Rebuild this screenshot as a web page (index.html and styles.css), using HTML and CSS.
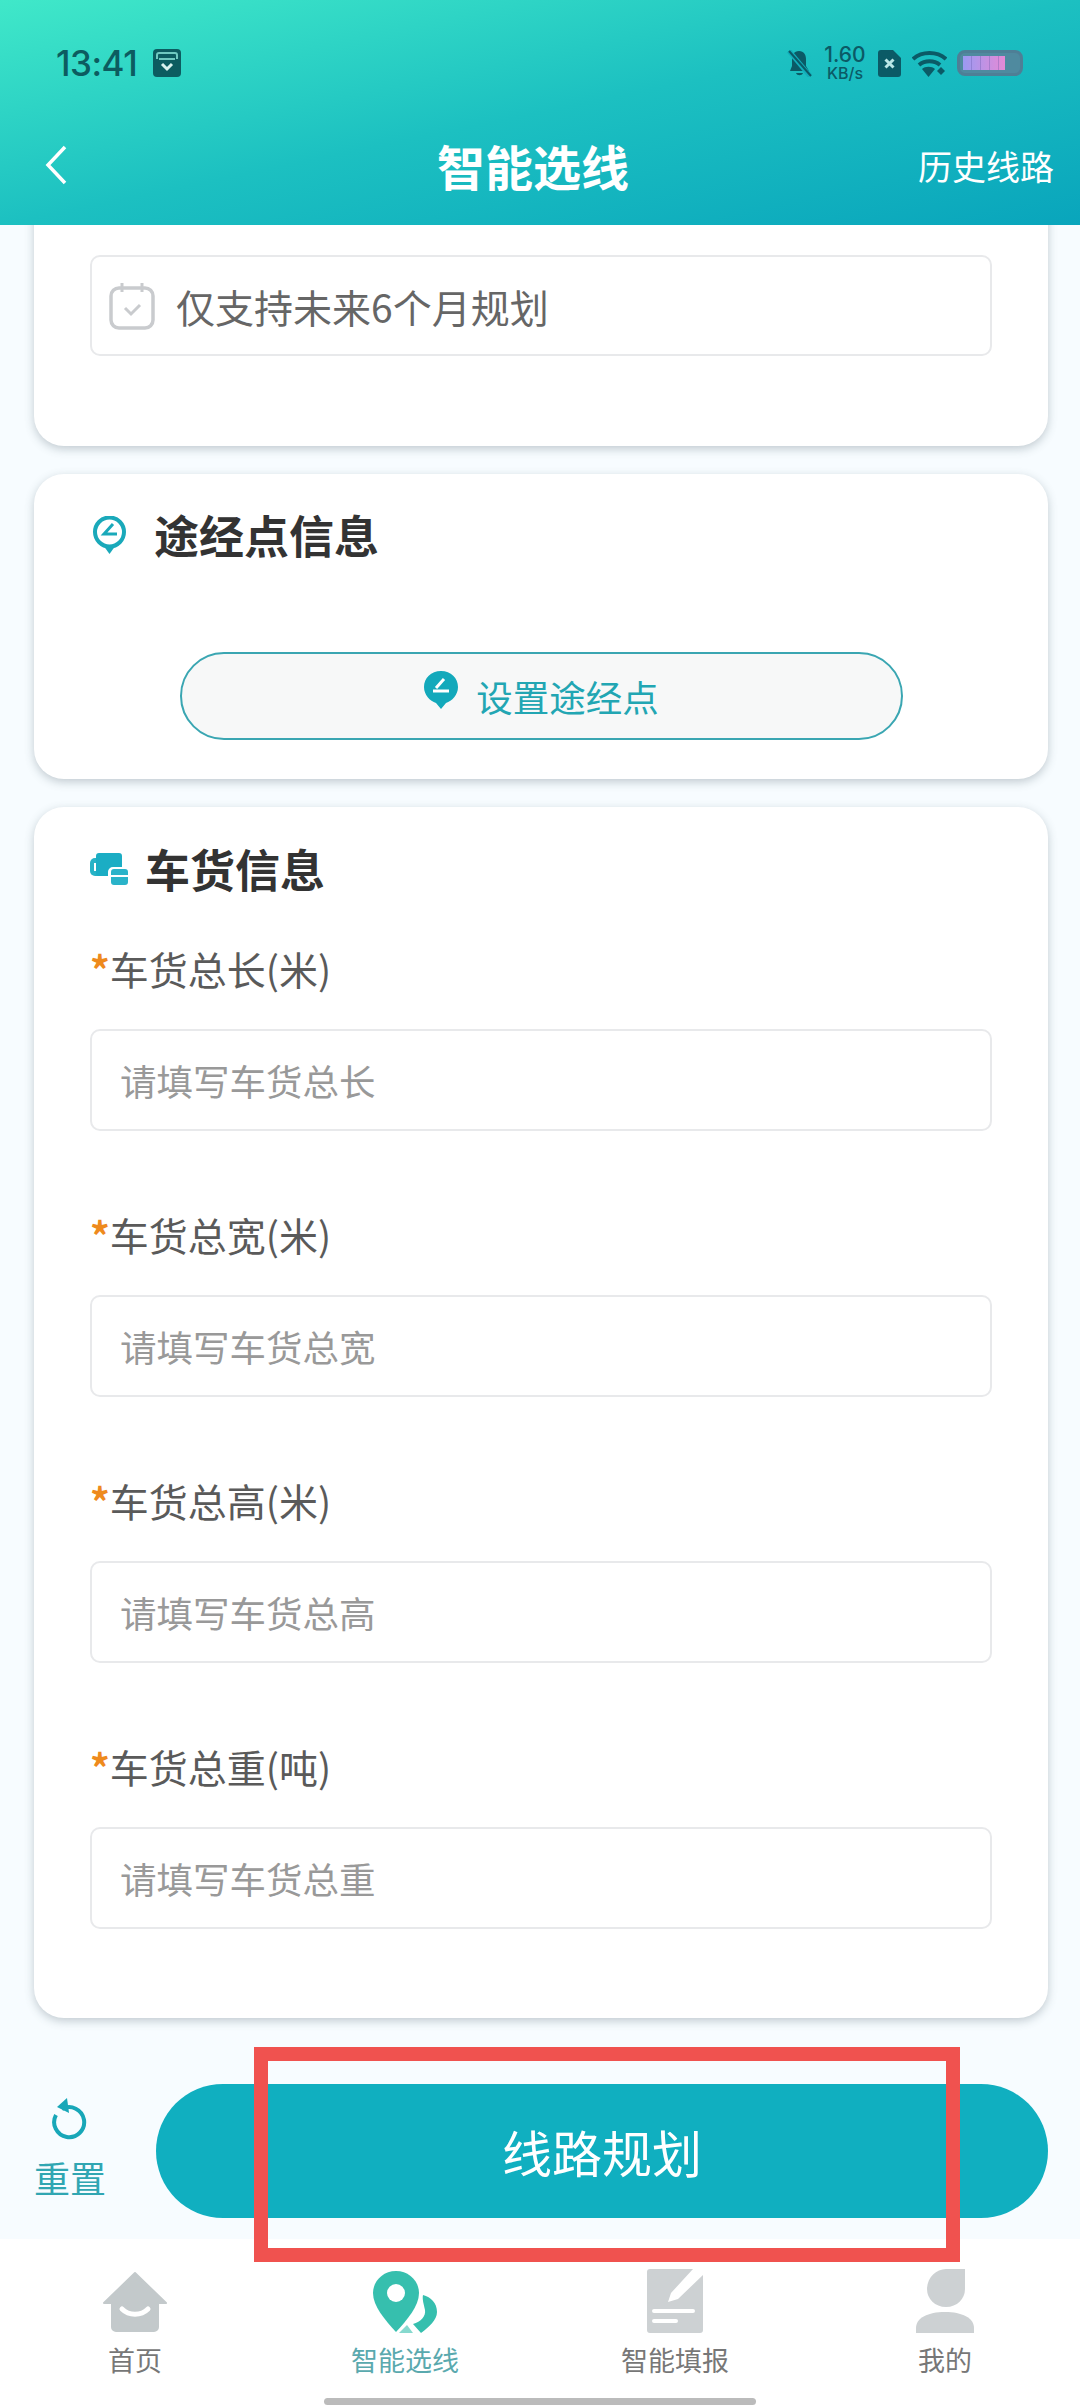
FILE: index.html
```html
<!DOCTYPE html>
<html lang="zh-CN">
<head>
  <meta charset="UTF-8">
  <meta name="viewport" content="width=device-width, initial-scale=1.0">
  <title>智能选线</title>
  <link rel="stylesheet" href="styles.css">
</head>
<body>
  <div class="page">
    <header class="top">
      <div class="status-bar">
        <div class="status-left">
          <span class="clock">13:41</span>
          <svg class="app-badge" viewBox="0 0 28 28"><rect width="28" height="28" rx="4" fill="#0c5c60"/><path d="M4 10V6a2 2 0 0 1 2-2h16a2 2 0 0 1 2 2v4" fill="none" stroke="#6fc9c0" stroke-width="2"/><path d="M6 10h16" stroke="#6fc9c0" stroke-width="2"/><path d="M9 15l5 5 5-5" fill="none" stroke="#d8f2ee" stroke-width="3"/></svg>
        </div>
        <div class="status-right">
          <svg class="bell" viewBox="0 0 25 27"><path d="M12 1c5 0 7 4 7 8v7l3 5H3l2-5V9c0-4 2-8 7-8zM9 23h7c-1 3-6 3-7 0z" fill="#0b5a66"/><path d="M2 1l21 25" stroke="#12aebb" stroke-width="5"/><path d="M2 1l22 25" stroke="#0b5a66" stroke-width="2"/></svg>
          <div class="speed"><span>1.60</span><span class="speed-unit">KB/s</span></div>
          <svg class="sim" viewBox="0 0 23 27"><path d="M3 0h12l8 8v16a3 3 0 0 1-3 3H3a3 3 0 0 1-3-3V3a3 3 0 0 1 3-3z" fill="#0b5a66"/><path d="M7.500 9.500l8 8m0-8l-8 8" stroke="#b9e6e6" stroke-width="3"/></svg>
          <svg class="wifi" viewBox="0 0 35 27"><g fill="none" stroke="#0b5a66" stroke-width="4"><path d="M1 9c9-8 24-8 33 0"/><path d="M7 15c6-5 15-5 21 0"/></g><path d="M10 19c3-3 10-3 13 0l-6.500 8z" fill="#0b5a66"/><path d="M29 17l4 4-4 4-4-4z" fill="#0b5a66"/></svg>
          <div class="battery">
            <div class="battery-level"></div>
          </div>
        </div>
      </div>
      <div class="nav-bar">
        <div class="nav-side">
          <svg class="back" viewBox="0 0 22 40"><path d="M20 2L3 20l17 18" fill="none" stroke="#fff" stroke-width="3.500"/></svg>
        </div>
        <div class="nav-title">智能选线</div>
        <div class="nav-side nav-history">历史线路</div>
      </div>
    </header>

    <main class="content">
      <div class="cards">
        <section class="card card-date">
          <div class="text-box date-box">
            <svg class="calendar" viewBox="0 0 46 48"><rect x="2" y="6" width="42" height="40" rx="8" fill="none" stroke="#c9cbce" stroke-width="3.500"/><path d="M13 1v9M33 1v9" stroke="#c9cbce" stroke-width="3"/><path d="M16 26l6 6 9-9" fill="none" stroke="#c9cbce" stroke-width="3"/></svg>
            <span>仅支持未来6个月规划</span>
          </div>
        </section>

        <section class="card card-via">
          <h3 class="card-title">
            <svg class="via-icon" viewBox="0 0 35 38"><circle cx="17.500" cy="16" r="14.500" fill="none" stroke="#1aa9ba" stroke-width="4"/><path d="M11 29h13l-6.500 9z" fill="#1aa9ba"/><path d="M21 8l-9 10h13" fill="none" stroke="#1aa9ba" stroke-width="3"/></svg>
            <span>途经点信息</span>
          </h3>
          <button class="via-button">
            <svg class="via-button-icon" viewBox="0 0 34 38"><path d="M17 0c10 0 17 7 17 16 0 8-6 14-12 16l-5 6-5-6C6 30 0 24 0 16 0 7 7 0 17 0z" fill="#13a9bb"/><path d="M20 8l-8 9" stroke="#fff" stroke-width="3"/><path d="M9 20h16" stroke="#fff" stroke-width="3"/></svg>
            <span>设置途经点</span>
          </button>
        </section>

        <section class="card card-cargo">
          <h3 class="card-title cargo-title">
            <svg class="truck-icon" viewBox="0 0 38 32"><path d="M9 5H5a5 5 0 0 0-5 5v8a5 5 0 0 0 5 5h4z" fill="#27b3c6"/><path d="M4 10h4v8H4z" fill="#fff"/><path d="M9 0h20a3 3 0 0 1 3 3v11H23a5 5 0 0 0-5 5v4H9a3 3 0 0 1-3-3V3a3 3 0 0 1 3-3z" fill="#1badc4"/><path d="M24 16h11a3 3 0 0 1 3 3v3H21v-3a3 3 0 0 1 3-3zM21 24h17v5a3 3 0 0 1-3 3H24a3 3 0 0 1-3-3z" fill="#2ab3c9"/></svg>
            <span>车货信息</span>
          </h3>
          <div class="field">
            <label class="field-label"><i>*</i>车货总长(米)</label>
            <input class="text-box field-input" placeholder="请填写车货总长">
          </div>
          <div class="field">
            <label class="field-label"><i>*</i>车货总宽(米)</label>
            <input class="text-box field-input" placeholder="请填写车货总宽">
          </div>
          <div class="field">
            <label class="field-label"><i>*</i>车货总高(米)</label>
            <input class="text-box field-input" placeholder="请填写车货总高">
          </div>
          <div class="field">
            <label class="field-label"><i>*</i>车货总重(吨)</label>
            <input class="text-box field-input" placeholder="请填写车货总重">
          </div>
        </section>
      </div>

      <div class="actions">
        <div class="reset">
          <svg class="reset-icon" viewBox="0 0 36 42"><path d="M10 11a15 15 0 1 1-6 6" fill="none" stroke="#18a7b8" stroke-width="4"/><path d="M5 9L15 0l2 15z" fill="#18a7b8"/></svg>
          <span>重置</span>
        </div>
        <button class="plan-button">线路规划</button>
      </div>
    </main>

    <nav class="tabs">
      <div class="tab">
        <svg class="tab-icon" viewBox="0 0 64 62"><path d="M32 2L63 32H55V56a4 4 0 0 1-4 4H13a4 4 0 0 1-4-4V32H1z" fill="#c3c9cb" stroke="#c3c9cb" stroke-width="2" stroke-linejoin="round"/><path d="M19 38c7 7 19 7 26 0" fill="none" stroke="#fff" stroke-width="5" stroke-linecap="round"/></svg>
        <span>首页</span>
      </div>
      <div class="tab tab-active">
        <svg class="tab-icon" viewBox="0 0 64 62"><path d="M23 0c13 0 23 10 23 22 0 13-12 27-23 39C12 49 0 35 0 22 0 10 10 0 23 0z" fill="#36bfae"/><circle cx="23" cy="22" r="9" fill="#fff"/><path d="M50 24c8 2 14 8 14 17 0 8-8 15-16 21l-8-9c8-2 13-8 12-14-1-5-3-11-2-15z" fill="#36bfae"/><path d="M28 60l6-6 6 8H26z" fill="#36bfae" opacity=".6"/></svg>
        <span>智能选线</span>
      </div>
      <div class="tab">
        <svg class="tab-icon tab-icon-tall" viewBox="0 0 56 64"><path d="M3 0h43L24 24l-3 9 10-3L56 6v55a3 3 0 0 1-3 3H3a3 3 0 0 1-3-3V3a3 3 0 0 1 3-3z" fill="#cdd1d3"/><path d="M7 42h39M7 52h22" stroke="#fff" stroke-width="4" stroke-linecap="round"/></svg>
        <span>智能填报</span>
      </div>
      <div class="tab">
        <svg class="tab-icon tab-icon-tall" viewBox="0 0 58 64"><path d="M30 0h19v20c0 10-8 18-19 18s-19-8-19-18C11 9 20 0 30 0z" fill="#cdd1d3"/><path d="M0 64v-5c0-10 12-16 29-16s29 6 29 16v5z" fill="#cdd1d3"/></svg>
        <span>我的</span>
      </div>
      <div class="home-bar"></div>
    </nav>

    <div class="highlight"></div>
  </div>
</body>
</html>
```

FILE: styles.css
```css
* { box-sizing: border-box; }
html, body { margin: 0; padding: 0; }
body {
  width: 1080px;
  height: 2408px;
  overflow: hidden;
  font-family: "Noto Sans CJK SC", "Noto Sans", sans-serif;
  background: #f7fcff;
}
.page { position: relative; display: flex; flex-direction: column; height: 2408px; }

/* top bar */
.top {
  position: relative;
  z-index: 2;
  flex: 0 0 225px;
  background: linear-gradient(to bottom right, #40e8c9 0%, #1cc0c1 50%, #09a5bc 100%);
}
.status-bar {
  display: flex;
  justify-content: space-between;
  align-items: center;
  height: 126px;
  padding: 0 57px 0 56px;
}
.status-left { display: flex; align-items: center; gap: 16px; }
.clock { font-family: Inter, "Noto Sans", sans-serif; font-size: 35px; font-weight: 500; color: #0c5c60; letter-spacing: -0.5px; }
.app-badge { width: 28px; height: 28px; }
.status-right { display: flex; align-items: center; }
.bell { width: 25px; height: 27px; margin-right: 12px; }
.speed {
  display: flex;
  flex-direction: column;
  align-items: center;
  width: 42px;
  font-family: Inter, "Noto Sans", sans-serif;
  font-size: 21px;
  font-weight: 500;
  line-height: 20px;
  color: #0b5a66;
}
.speed-unit { font-size: 16px; line-height: 16px; }
.sim { width: 23px; height: 27px; margin-left: 12px; }
.wifi { width: 35px; height: 27px; margin-left: 11px; }
.battery {
  width: 66px;
  height: 26px;
  margin-left: 10px;
  padding: 3px;
  border: 3px solid #4e7f96;
  border-radius: 8px;
  background: #4f8a9f;
}
.battery-level {
  width: 42px;
  height: 100%;
  background: repeating-linear-gradient(to right, transparent 0 8px, rgba(90, 80, 160, 0.3) 8px 9px), linear-gradient(to right, #9a9af2, #e58ad6);
}
.nav-bar {
  display: flex;
  justify-content: space-between;
  align-items: center;
  height: 78px;
}
.nav-side { flex: 0 0 200px; padding-left: 45px; }
.back { display: block; width: 22px; height: 40px; }
.nav-title { margin-right: 14px; font-size: 48px; font-weight: 700; color: #fff; }
.nav-history { padding: 0 26px 0 0; text-align: right; font-size: 34px; color: #fff; }

/* cards */
.content {
  display: flex;
  flex-direction: column;
  flex: 1;
  min-height: 0;
}
.cards { display: flex; flex-direction: column; gap: 28px; padding: 0 32px 0 34px; }
.card {
  background: #fff;
  border-radius: 30px;
  box-shadow: 0 3px 10px rgba(70, 90, 100, 0.3);
  padding: 0 57px 0 56px;
}
.card-date { height: 261px; margin-top: -40px; padding-top: 70px; }
.card-via { height: 305px; padding-top: 37px; }
.card-cargo { height: 1211px; padding-top: 38px; }
.card-title {
  display: flex;
  align-items: center;
  margin: 0;
  font-size: 45px;
  font-weight: 700;
  line-height: 48px;
  color: #333;
}
.via-icon { width: 35px; height: 38px; margin: 0 27px 0 2px; }
.cargo-title { margin-bottom: 45px; }
.truck-icon { width: 38px; height: 32px; margin-right: 17px; }
.text-box {
  display: block;
  width: 902px;
  background: #fff;
  border: 2px solid #e8e9eb;
  border-radius: 10px;
}
.date-box {
  display: flex;
  align-items: center;
  height: 101px;
  padding-left: 17px;
  font-size: 39px;
  color: #666;
}
.calendar { width: 46px; height: 48px; margin-right: 21px; }

/* via button */
.via-button {
  display: flex;
  align-items: center;
  justify-content: center;
  width: 723px;
  height: 88px;
  margin: 93px 0 0 90px;
  border: 2px solid #3aa6b2;
  border-radius: 44px;
  background: #f7f8f8;
  font-family: inherit;
  font-size: 36.500px;
  color: #22a6b3;
}
.via-button-icon { width: 34px; height: 38px; margin: -12px 18px 0 0; }

/* cargo fields */
.field { margin-bottom: 73px; }
.field-label {
  display: block;
  height: 60px;
  margin-bottom: 31px;
  font-size: 39px;
  line-height: 60px;
  color: #5a5a5a;
}
.field-label i { font-style: normal; font-weight: 700; color: #ee8a1d; }
.field-input {
  height: 102px;
  padding: 0 0 0 28px;
  font-family: inherit;
  font-size: 36.500px;
  outline: none;
}
.field-input::placeholder { color: #999; opacity: 1; }

/* bottom actions */
.actions { display: flex; align-items: center; flex: 1; padding: 44px 32px 0 34px; }
.reset {
  display: flex;
  flex-direction: column;
  align-items: center;
  flex: 0 0 72px;
  margin: -4px 50px 0 0;
  font-size: 36px;
  line-height: 46px;
  color: #30a6b2;
}
.reset-icon { width: 36px; height: 42px; margin-bottom: 14px; }
.plan-button {
  flex: 1;
  height: 134px;
  border: none;
  border-radius: 67px;
  background: #10afc0;
  font-family: inherit;
  font-size: 50px;
  color: #fff;
}
.highlight {
  position: absolute;
  left: 254px;
  top: 2047px;
  width: 706px;
  height: 215px;
  border: 14px solid #f0524f;
  z-index: 3;
}

/* tabs */
.tabs {
  position: relative;
  display: grid;
  grid-template-columns: repeat(4, 270px);
  flex: 0 0 169px;
  padding-top: 32px;
  background: #fff;
}
.tab {
  display: flex;
  flex-direction: column;
  align-items: center;
  font-size: 27px;
  line-height: 38px;
  color: #777;
}
.tab-active { color: #5aa9ae; }
.tab-icon { display: block; width: 64px; height: 62px; margin-bottom: 8px; }
.tab-icon-tall { height: 64px; margin: -2px 0 8px; }
.home-bar {
  position: absolute;
  left: 324px;
  bottom: 3px;
  width: 432px;
  height: 7px;
  border-radius: 4px;
  background: #bbb;
}
```
